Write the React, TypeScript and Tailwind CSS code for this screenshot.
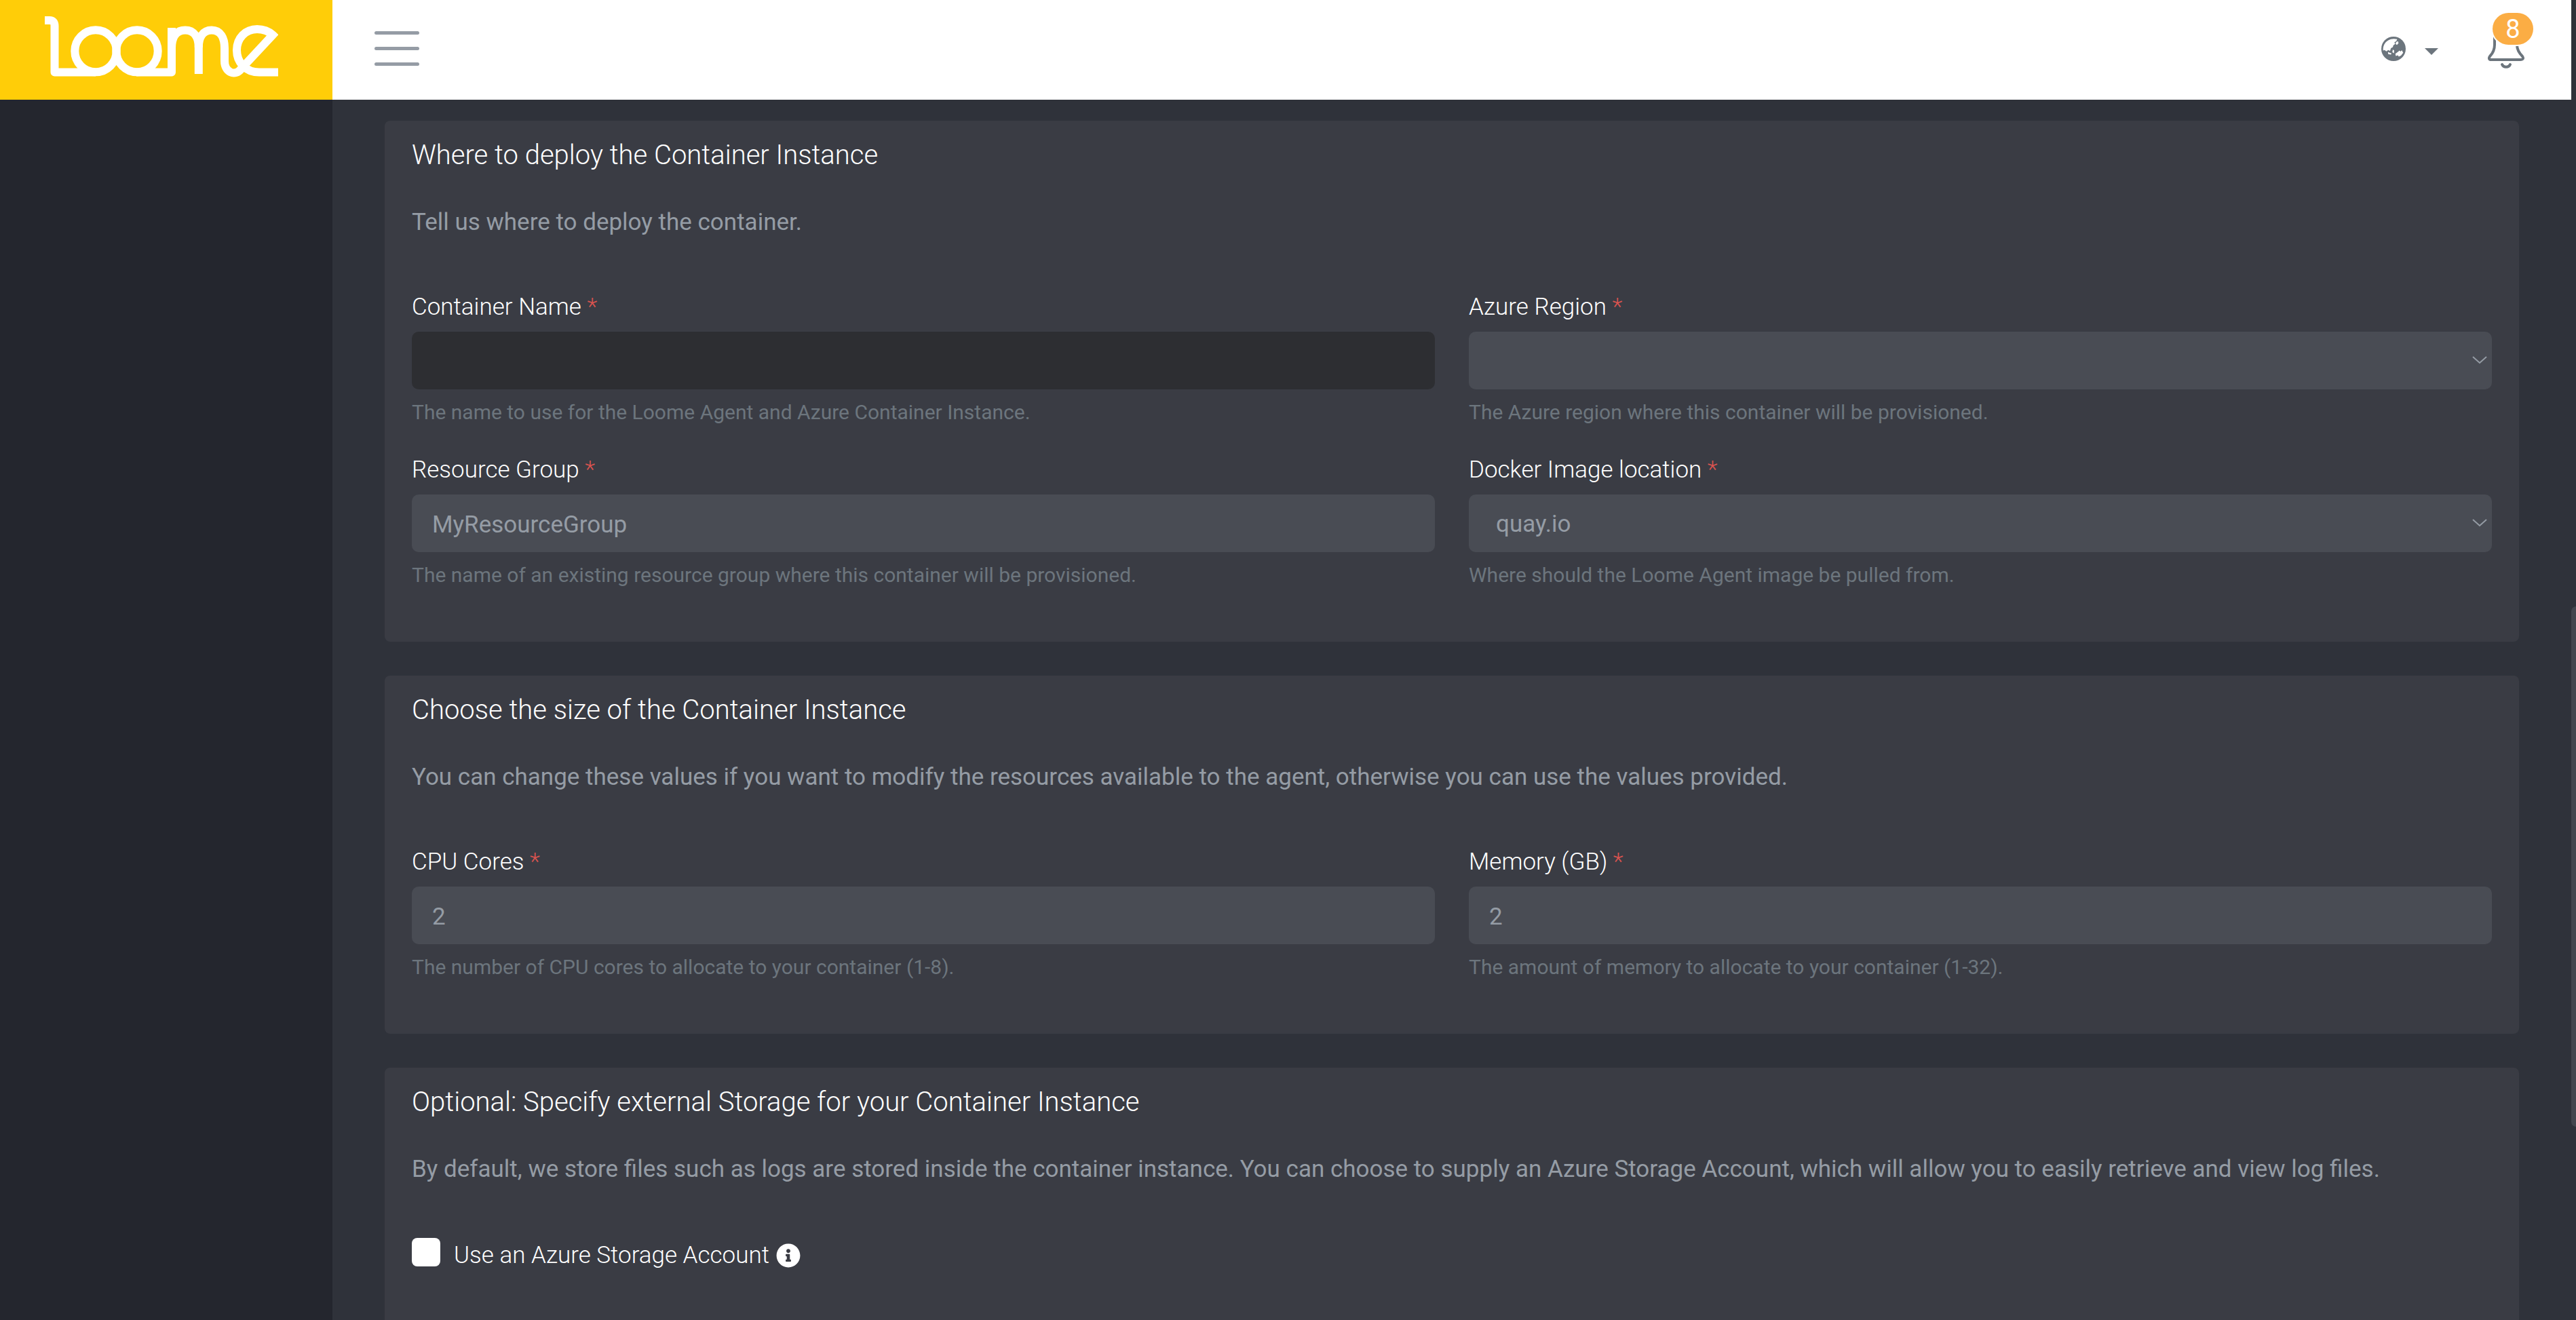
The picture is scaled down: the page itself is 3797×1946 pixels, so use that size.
import { useId, type ReactNode } from "react";
import { FaInfoCircle } from "react-icons/fa";

function LoomeLogo() {
  return (
    <svg
      viewBox="0 0 344 90"
      className="h-[90px] w-[344px]"
      fill="none"
      stroke="#ffffff"
      strokeWidth="12"
      strokeLinejoin="round"
      role="img"
      aria-label="Loome"
    >
      <path d="M0 6H7Q14.5 6 14.5 14V82.5H75" />
      <ellipse cx="75" cy="51.3" rx="30.7" ry="31" />
      <ellipse cx="136" cy="51.3" rx="30.7" ry="31" />
      <path d="M135 82.5H187V17" />
      <path d="M187 47C187 30 194 20.6 207 20.6C220 20.6 226.8 31 226.8 46V85" />
      <path d="M226.8 46C226.8 31 233 20.6 246 20.6C259 20.6 265 32 265 47V66C265 82 280 90 290 77" />
      <path d="M288 79L336 27.5C330 22 323 19 313 19C296 19 283 32 283 50C283 68 296 82.5 316 82.5H344" strokeLinejoin="miter" />
    </svg>
  );
}

function GlobeIcon() {
  return (
    <svg viewBox="0 0 106 106" className="size-9" aria-hidden="true">
      <circle cx="53" cy="53" r="53" fill="#6c757d" />
      <g fill="#ffffff">
        <path d="M8 60C7 40 15 24 30 16C42 9 54 8 69 11L65 20L57 24L60 32L52 38L50 46L42 50L38 62L30 58L22 64L14 58Z" />
        <path d="M64 24L72 20L75 28L68 36L62 32Z" />
        <path d="M50 56L56 60L55 72L48 68Z" />
        <path d="M29 66L36 70L44 72L42 78L30 76Z" />
        <path d="M61 74L72 66L79 60L84 65L89 59L95 70L86 82L76 87L72 81L63 84Z" />
      </g>
    </svg>
  );
}

function BellIcon() {
  return (
    <svg viewBox="0 0 54 64" className="h-16 w-[54px]" fill="none" stroke="#6c757d" strokeWidth="4" strokeLinecap="round" strokeLinejoin="round" aria-hidden="true">
      <path d="M10 12V28C10 36 7 41 3 45C1 48 2 50 5 50H48C52 50 53 48 51 45C47 41 43 36 43 28V12" />
      <path d="M21 57C23 62 31 62 33 57" />
    </svg>
  );
}

function Card({ title, text, children }: { title: string; text: string; children: ReactNode }) {
  return (
    <section className="rounded-lg bg-[#3a3c44] px-10 pt-[25px] pb-[39px]">
      <h2 className="text-[40px] leading-[52px] font-light text-white">{title}</h2>
      <p className="mt-[49px] text-[35px] leading-[48px] text-[#959ca5]">{text}</p>
      <div className="mt-[75px]">{children}</div>
    </section>
  );
}

function Field({ label, help, children }: { label: string; help: string; children: (id: string) => ReactNode }) {
  const id = useId();
  return (
    <div className="flex flex-col pb-[39px]">
      <label htmlFor={id} className="text-[35px] leading-[52px] font-light text-white">
        {label} <span className="text-[#d9534f]">*</span>
      </label>
      <div className="relative mt-[10px]">{children(id)}</div>
      <small className="mt-[14px] text-[30px] leading-10 text-[#6c757d]">{help}</small>
    </div>
  );
}

function TextField({ label, help, value = "", active = false }: { label: string; help: string; value?: string; active?: boolean }) {
  return (
    <Field label={label} help={help}>
      {(id) => (
        <input
          id={id}
          type="text"
          defaultValue={value}
          className={`block h-[85px] w-full rounded-[10px] px-[30px] pt-[3px] text-[35px] text-[#959ca5] outline-none ${active ? "bg-[#2d2e32]" : "bg-[#494c54]"}`}
        />
      )}
    </Field>
  );
}

function SelectField({ label, help, options }: { label: string; help: string; options: string[] }) {
  return (
    <Field label={label} help={help}>
      {(id) => (
        <>
          <select id={id} className="block h-[85px] w-full appearance-none rounded-[10px] bg-[#494c54] px-10 pt-[3px] text-[35px] text-[#959ca5] outline-none">
            {options.map((option) => (
              <option key={option}>{option}</option>
            ))}
          </select>
          <svg viewBox="0 0 22 12" className="pointer-events-none absolute top-9 right-[7px] h-3 w-[22px]" fill="none" stroke="#959ca5" strokeWidth="2" aria-hidden="true">
            <path d="M1 1L11 10L21 1" />
          </svg>
        </>
      )}
    </Field>
  );
}

export default function App() {
  return (
    <div className="relative flex h-screen flex-col overflow-hidden bg-[#2f323a] font-['Roboto',sans-serif]">
      <header className="mr-[7px] flex h-[147px] shrink-0 bg-white">
        <a href="#" className="flex w-[490px] items-start bg-[#ffcd08] pt-6 pl-[66px]">
          <LoomeLogo />
        </a>
        <div className="flex flex-1 items-start justify-between pr-[56px] pl-[62px]">
          <button type="button" aria-label="Toggle menu" className="mt-[46px] flex w-[66px] flex-col gap-[18px]">
            <span className="h-[5px] rounded-full bg-[#959ca5]" />
            <span className="h-[5px] rounded-full bg-[#959ca5]" />
            <span className="h-[5px] rounded-full bg-[#959ca5]" />
          </button>
          <div className="flex items-start">
            <button type="button" aria-label="Language" className="mt-[54px] mr-[73px] flex items-center gap-7 text-[#6c757d]">
              <GlobeIcon />
              <svg viewBox="0 0 20 10" className="mt-2 h-[10px] w-5" fill="currentColor" aria-hidden="true">
                <path d="M0 0H20L10 10Z" />
              </svg>
            </button>
            <button type="button" aria-label="Notifications" className="relative mt-[38px] mr-[13px]">
              <BellIcon />
              <span className="absolute -top-[19px] left-[7px] flex h-[47px] w-[60px] items-center justify-center rounded-full bg-[#fbad44] text-[38px] leading-none text-white ring-2 ring-white">
                8
              </span>
            </button>
          </div>
        </div>
      </header>

      <div className="flex min-h-0 flex-1">
        <aside className="w-[490px] shrink-0 bg-[#24262e]" />
        <main className="flex flex-1 flex-col gap-[50px] overflow-hidden pt-[31px] pr-[84px] pl-[77px]">
          <Card title="Where to deploy the Container Instance" text="Tell us where to deploy the container.">
            <div className="grid grid-cols-2 gap-x-[50px]">
              <TextField label="Container Name" help="The name to use for the Loome Agent and Azure Container Instance." active />
              <SelectField label="Azure Region" help="The Azure region where this container will be provisioned." options={[""]} />
              <TextField label="Resource Group" help="The name of an existing resource group where this container will be provisioned." value="MyResourceGroup" />
              <SelectField label="Docker Image location" help="Where should the Loome Agent image be pulled from." options={["quay.io"]} />
            </div>
          </Card>
          <Card
            title="Choose the size of the Container Instance"
            text="You can change these values if you want to modify the resources available to the agent, otherwise you can use the values provided."
          >
            <div className="grid grid-cols-2 gap-x-[50px]">
              <TextField label="CPU Cores" help="The number of CPU cores to allocate to your container (1-8)." value="2" />
              <TextField label="Memory (GB)" help="The amount of memory to allocate to your container (1-32)." value="2" />
            </div>
          </Card>
          <Card
            title="Optional: Specify external Storage for your Container Instance"
            text="By default, we store files such as logs are stored inside the container instance. You can choose to supply an Azure Storage Account, which will allow you to easily retrieve and view log files."
          >
            <div className="flex items-start pb-32">
              <input id="use-storage" type="checkbox" className="mt-[2px] size-[42px] appearance-none rounded-lg bg-white" />
              <label htmlFor="use-storage" className="mt-[6px] ml-5 flex items-center gap-[10px] text-[35px] leading-[44px] font-light text-white">
                Use an Azure Storage Account
                <FaInfoCircle className="size-9" />
              </label>
            </div>
          </Card>
        </main>
      </div>

      <div className="absolute top-[894px] right-0 h-[767px] w-[7px] rounded-l-lg bg-[#43464e]" />
    </div>
  );
}
